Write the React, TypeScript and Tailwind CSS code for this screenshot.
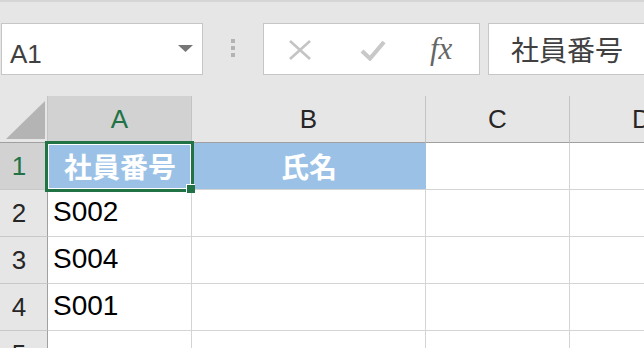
import React from "react";

const LATIN = { fontFamily: '"Liberation Sans", "Noto Sans CJK JP", sans-serif' };
const CJK = { fontFamily: '"Noto Sans CJK JP", "Liberation Sans", sans-serif' };

function ColHead({ label, selected }: { label: string; selected?: boolean }) {
  return (
    <div
      className={`flex items-center justify-center border-r border-b border-r-[#c4c4c4] border-b-[#a0a0a0] text-[26px] ${
        selected ? "bg-[#d2d2d2] text-[#217346]" : "bg-[#e6e6e6] text-[#262626]"
      }`}
      style={LATIN}
    >
      {label}
    </div>
  );
}

function RowHead({ label, selected }: { label: string; selected?: boolean }) {
  return (
    <div
      className={`flex items-center justify-center pr-[9px] border-r border-b border-r-[#a0a0a0] border-b-[#c8c8c8] text-[26px] ${
        selected ? "bg-[#d2d2d2] text-[#217346]" : "bg-[#e6e6e6] text-[#262626]"
      }`}
      style={LATIN}
    >
      {label}
    </div>
  );
}

function Cell({ children }: { children?: React.ReactNode }) {
  return (
    <div
      className="flex items-center pl-[5px] pb-[2px] bg-white border-r border-b border-[#d4d4d4] text-[28px] text-black"
      style={LATIN}
    >
      {children}
    </div>
  );
}

function HeadCell({ children }: { children: React.ReactNode }) {
  return (
    <div
      className="flex items-center justify-center bg-[#9bc2e6] border-b border-[#d4d4d4] text-[28px] font-bold text-white leading-none"
      style={CJK}
    >
      {children}
    </div>
  );
}

export default function App() {
  const rows = [
    { n: "2", a: "S002" },
    { n: "3", a: "S004" },
    { n: "4", a: "S001" },
    { n: "5", a: "" },
  ];
  return (
    <div className="w-[644px] h-[348px] overflow-hidden bg-[#e6e6e6] relative">
      <div className="h-[2px] bg-[#d6d6d6]" />
      {/* toolbar */}
      <div className="flex items-stretch mt-[21px] h-[52px] w-[900px]">
        <div className="ml-[1px] w-[202px] bg-white border border-[#c6c6c6] flex items-center justify-between pl-[8px] pr-[9px]">
          <span className="text-[26px] text-[#404040] pt-[11px]" style={LATIN}>
            A1
          </span>
          <svg width="15" height="7" viewBox="0 0 15 7" className="mb-[2px]">
            <polygon points="0,0 15,0 7.5,7" fill="#767676" />
          </svg>
        </div>
        <div className="ml-[28px] flex flex-col gap-[3px] pt-[16px]">
          <div className="w-[4px] h-[4px] bg-[#b3b3b3]" />
          <div className="w-[4px] h-[4px] bg-[#b3b3b3]" />
          <div className="w-[4px] h-[4px] bg-[#b3b3b3]" />
        </div>
        <div className="ml-[28px] w-[217px] bg-white border border-[#c6c6c6] flex items-center pl-[24px]">
          <svg width="24" height="22" viewBox="0 0 24 22" className="mt-[2px]">
            <line x1="2" y1="2" x2="22" y2="20" stroke="#c4c4c4" strokeWidth="2.6" />
            <line x1="22" y1="2" x2="2" y2="20" stroke="#c4c4c4" strokeWidth="2.6" />
          </svg>
          <svg width="26" height="22" viewBox="0 0 26 22" className="ml-[48px] mt-[2px]">
            <polyline
              points="2,12 10,19.5 24,3"
              fill="none"
              stroke="#c8c8c8"
              strokeWidth="4.2"
              strokeLinejoin="miter"
            />
          </svg>
          <span
            className="ml-[44px] text-[31px] italic text-[#666666] leading-none pb-[2px]"
            style={{ fontFamily: '"Liberation Serif", serif' }}
          >
            fx
          </span>
        </div>
        <div className="ml-[8px] w-[300px] bg-white border border-[#c6c6c6] flex items-center pl-[22px]">
          <span className="text-[28px] text-[#404040] leading-none" style={CJK}>
            社員番号
          </span>
        </div>
      </div>

      {/* grid */}
      <div className="relative mt-[21px]">
        <div className="grid grid-cols-[48px_144px_234px_144px_144px] grid-rows-[47px_47px_47px_47px_47px_47px] w-[714px]">
          <div className="bg-[#e6e6e6] border-r border-b border-r-[#c4c4c4] border-b-[#a0a0a0] flex items-end justify-end pr-[2px] pb-[3px]">
            <svg width="39" height="38" viewBox="0 0 39 38">
              <polygon points="0,38 39,38 39,0" fill="#b4b4b4" />
            </svg>
          </div>
          <ColHead label="A" selected />
          <ColHead label="B" />
          <ColHead label="C" />
          <ColHead label="D" />

          <RowHead label="1" selected />
          <HeadCell>社員番号</HeadCell>
          <HeadCell>氏名</HeadCell>
          <Cell />
          <Cell />

          {rows.map((r) => (
            <React.Fragment key={r.n}>
              <RowHead label={r.n} />
              <Cell>{r.a}</Cell>
              <Cell />
              <Cell />
              <Cell />
            </React.Fragment>
          ))}
        </div>
        {/* selection */}
        <div className="absolute left-[45px] top-[45px] w-[149px] h-[51px] border-[3px] border-[#217346] shadow-[inset_0_0_0_1px_#ffffff]" />
        <div className="absolute left-[186px] top-[88px] w-[9px] h-[9px] bg-[#217346] border-l border-t border-white" />
      </div>
    </div>
  );
}
